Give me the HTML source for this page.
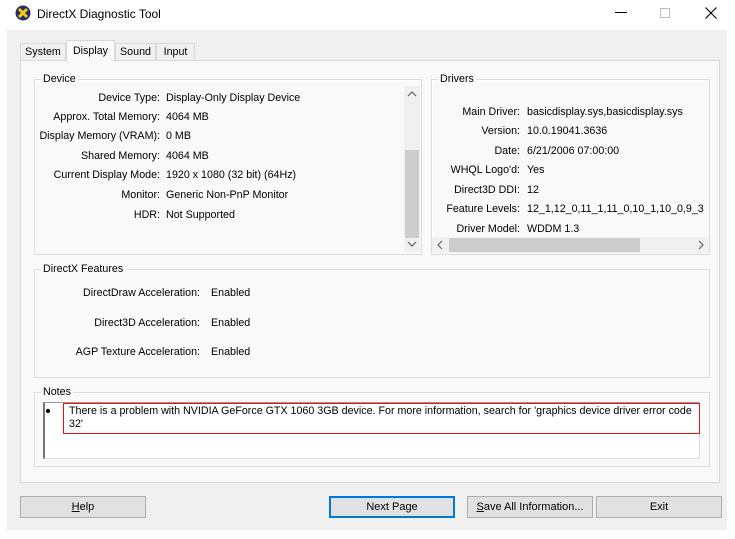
<!DOCTYPE html>
<html><head><meta charset="utf-8"><style>
*{margin:0;padding:0;box-sizing:border-box}
body{width:735px;height:539px;background:#fff;position:relative;overflow:hidden;font-family:"Liberation Sans",Tahoma,sans-serif;font-size:10.7px;color:#000}
.a{position:absolute;white-space:nowrap}
.win{position:absolute;left:7px;top:30px;width:720px;height:500px;background:#f0f0f0}
.grp{position:absolute;border:1px solid #dcdcdc;box-shadow:inset 1px 1px 0 #fff}
.lg{position:absolute;top:-8px;left:6px;background:#f0f0f0;padding:0 2px;line-height:14px}
.l{position:absolute;text-align:right;line-height:14px;white-space:nowrap}
.v{position:absolute;line-height:14px;white-space:nowrap}
.btn{position:absolute;top:496px;height:22px;background:#e1e1e1;border:1px solid #adadad;text-align:center;line-height:20px;font-size:11px}
</style></head><body>
<svg class="a" style="left:15px;top:5px" width="16" height="16" viewBox="0 0 16 16"><circle cx="8" cy="8" r="7.5" fill="#2a2a6e"/><path d="M4 4L12 12M12 4L4 12" stroke="#f0d000" stroke-width="3"/></svg>
<div class="a" style="left:37px;top:6px;font-size:12px;line-height:16px">DirectX Diagnostic Tool</div>
<div class="a" style="left:615px;top:12px;width:12px;height:1px;background:#000"></div>
<div class="a" style="left:660px;top:8px;width:10px;height:10px;border:1px solid #bbb"></div>
<svg class="a" style="left:705px;top:7px" width="12" height="12"><path d="M0.5 0.5L11.5 11.5M11.5 0.5L0.5 11.5" stroke="#000" stroke-width="1.1"/></svg>
<div class="win"></div>
<div class="a" style="left:20px;top:43px;width:46px;height:18px;border:1px solid #d9d9d9;border-bottom:none;background:#f0f0f0;line-height:17px;text-align:center">System</div>
<div class="a" style="left:115px;top:43px;width:41px;height:18px;border:1px solid #d9d9d9;border-bottom:none;line-height:17px;text-align:center">Sound</div>
<div class="a" style="left:156px;top:43px;width:39px;height:18px;border:1px solid #d9d9d9;border-bottom:none;line-height:17px;text-align:center">Input</div>
<div class="a" style="left:20px;top:60px;width:700px;height:423px;border:1px solid #d9d9d9;background:#f9f9f9"></div>
<div class="a" style="left:66px;top:40px;width:49px;height:22px;border:1px solid #d9d9d9;border-bottom:none;background:#f9f9f9;line-height:20px;text-align:center">Display</div>
<div class="grp" style="left:34px;top:79px;width:388px;height:176px"><div class="lg" style="background:#f9f9f9">Device</div></div>
<div class="l" style="left:30px;width:130px;top:91px">Device Type:</div><div class="v" style="left:166px;top:91px">Display-Only Display Device</div>
<div class="l" style="left:30px;width:130px;top:110px">Approx. Total Memory:</div><div class="v" style="left:166px;top:110px">4064 MB</div>
<div class="l" style="left:30px;width:130px;top:129px">Display Memory (VRAM):</div><div class="v" style="left:166px;top:129px">0 MB</div>
<div class="l" style="left:30px;width:130px;top:149px">Shared Memory:</div><div class="v" style="left:166px;top:149px">4064 MB</div>
<div class="l" style="left:30px;width:130px;top:168px">Current Display Mode:</div><div class="v" style="left:166px;top:168px">1920 x 1080 (32 bit) (64Hz)</div>
<div class="l" style="left:30px;width:130px;top:188px">Monitor:</div><div class="v" style="left:166px;top:188px">Generic Non-PnP Monitor</div>
<div class="l" style="left:30px;width:130px;top:208px">HDR:</div><div class="v" style="left:166px;top:208px">Not Supported</div>
<div class="a" style="left:404px;top:86px;width:16px;height:166px;background:#f0f0f0"></div>
<div class="a" style="left:405px;top:150px;width:14px;height:88px;background:#cdcdcd"></div>
<svg class="a" style="left:407px;top:91px" width="10" height="6"><path d="M1 5L5 1L9 5" stroke="#606060" fill="none" stroke-width="1.2"/></svg>
<svg class="a" style="left:407px;top:241px" width="10" height="6"><path d="M1 1L5 5L9 1" stroke="#606060" fill="none" stroke-width="1.2"/></svg>
<div class="grp" style="left:431px;top:79px;width:279px;height:176px"><div class="lg" style="background:#f9f9f9">Drivers</div></div>
<div class="l" style="left:430px;width:90px;top:105px">Main Driver:</div><div class="v" style="left:527px;top:105px">basicdisplay.sys,basicdisplay.sys</div>
<div class="l" style="left:430px;width:90px;top:124px">Version:</div><div class="v" style="left:527px;top:124px">10.0.19041.3636</div>
<div class="l" style="left:430px;width:90px;top:144px">Date:</div><div class="v" style="left:527px;top:144px">6/21/2006 07:00:00</div>
<div class="l" style="left:430px;width:90px;top:163px">WHQL Logo'd:</div><div class="v" style="left:527px;top:163px">Yes</div>
<div class="l" style="left:430px;width:90px;top:183px">Direct3D DDI:</div><div class="v" style="left:527px;top:183px">12</div>
<div class="l" style="left:430px;width:90px;top:202px">Feature Levels:</div><div class="v" style="left:527px;top:202px;width:182px;overflow:hidden">12_1,12_0,11_1,11_0,10_1,10_0,9_3</div>
<div class="l" style="left:430px;width:90px;top:222px">Driver Model:</div><div class="v" style="left:527px;top:222px">WDDM 1.3</div>
<div class="a" style="left:432px;top:237px;width:277px;height:16px;background:#f0f0f0"></div>
<div class="a" style="left:449px;top:238px;width:191px;height:14px;background:#cdcdcd"></div>
<svg class="a" style="left:437px;top:240px" width="6" height="10"><path d="M5 1L1 5L5 9" stroke="#606060" fill="none" stroke-width="1.2"/></svg>
<svg class="a" style="left:698px;top:240px" width="6" height="10"><path d="M1 1L5 5L1 9" stroke="#606060" fill="none" stroke-width="1.2"/></svg>
<div class="grp" style="left:34px;top:269px;width:676px;height:109px"><div class="lg" style="background:#f9f9f9">DirectX Features</div></div>
<div class="l" style="left:40px;width:160px;top:286px">DirectDraw Acceleration:</div><div class="v" style="left:211px;top:286px">Enabled</div>
<div class="l" style="left:40px;width:160px;top:316px">Direct3D Acceleration:</div><div class="v" style="left:211px;top:316px">Enabled</div>
<div class="l" style="left:40px;width:160px;top:345px">AGP Texture Acceleration:</div><div class="v" style="left:211px;top:345px">Enabled</div>
<div class="grp" style="left:34px;top:392px;width:676px;height:75px"><div class="lg" style="background:#f9f9f9">Notes</div></div>
<div class="a" style="left:43px;top:402px;width:657px;height:57px;background:#fff;border-left:2px solid #777;border-top:1px solid #999;border-bottom:1px solid #ddd;border-right:1px solid #ddd"></div>
<div class="a" style="left:46px;top:409px;width:4px;height:4px;border-radius:2px;background:#000"></div>
<div class="a" style="left:63px;top:403px;width:637px;height:31px;background:#ee1111"></div>
<div class="a" style="left:64px;top:404px;width:635px;height:29px;background:#fff"></div>
<div class="a" style="left:69px;top:405px;line-height:13px">There is a problem with NVIDIA GeForce GTX 1060 3GB device. For more information, search for 'graphics device driver error code<br>32'</div>
<div class="btn" style="left:20px;width:126px"><u>H</u>elp</div>
<div class="btn" style="left:329px;width:126px;border:2px solid #0078d7;line-height:18px">Next Page</div>
<div class="btn" style="left:467px;width:126px"><u>S</u>ave All Information...</div>
<div class="btn" style="left:596px;width:126px">Exit</div>
</body></html>
